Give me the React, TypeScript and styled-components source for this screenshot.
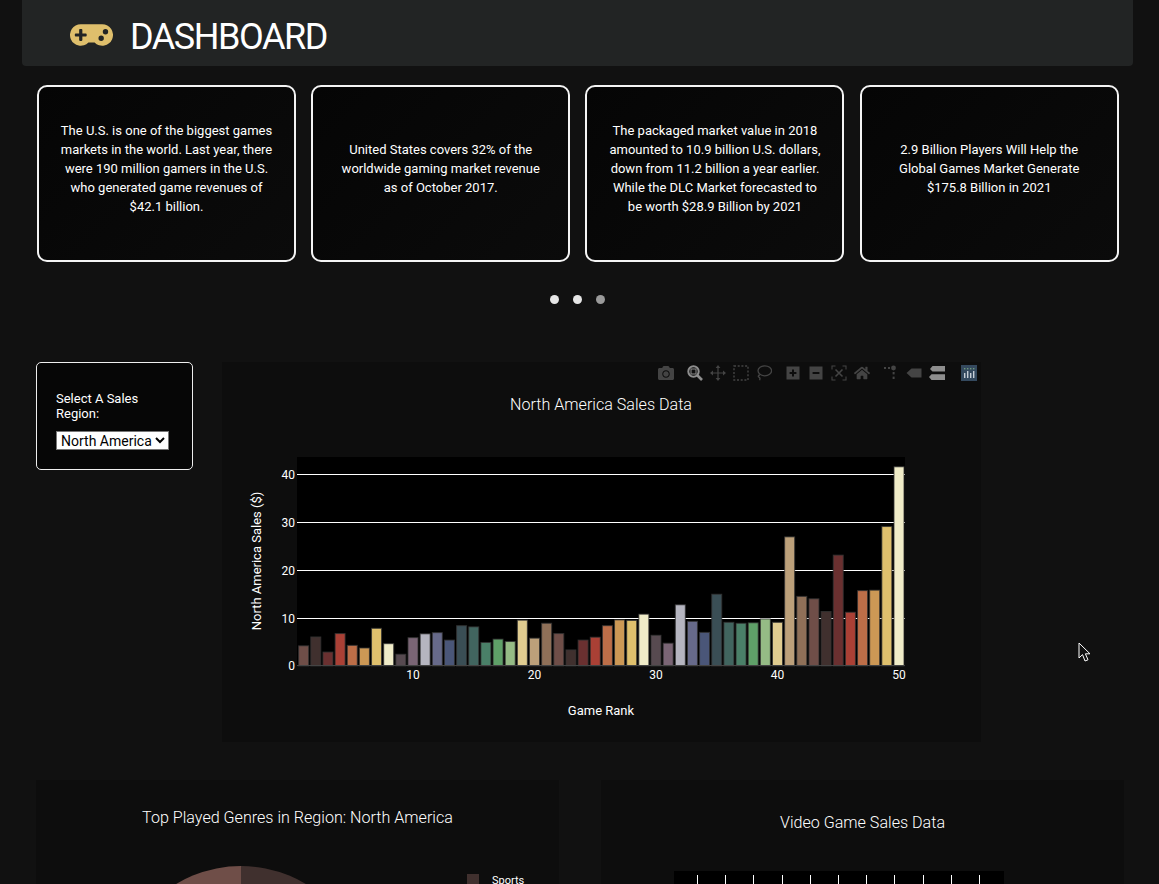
import React from "react";
import styled, { createGlobalStyle } from "styled-components";
import { FaCamera, FaGamepad, FaHome } from "react-icons/fa";

const GlobalStyle = createGlobalStyle`
  html, body {
    margin: 0;
    padding: 0;
    background: #111111;
    overflow: hidden;
  }
  * {
    box-sizing: border-box;
  }
`;

const Page = styled.div`
  width: 1159px;
  height: 884px;
  overflow: hidden;
  position: relative;
  background: #111111;
  color: #fff;
  font-family: Roboto, "Liberation Sans", sans-serif;
`;

const Header = styled.header`
  margin: 0 26px 0 22px;
  height: 66px;
  padding: 0 48px;
  display: flex;
  align-items: center;
  gap: 17px;
  background: #222424;
  border-radius: 0 0 4px 4px;
  svg {
    width: 43px;
    height: 36px;
    color: #dfbf6c;
    margin-top: 3px;
  }
`;

const Title = styled.h1`
  margin: 7px 0 0;
  font-size: 36px;
  line-height: 42px;
  font-weight: 400;
  letter-spacing: -1.45px;
`;

const Cards = styled.section`
  margin: 19px 40.3px 0 37px;
  display: grid;
  grid-template-columns: repeat(4, 259px);
  justify-content: space-between;
`;

const Card = styled.div`
  height: 177px;
  padding: 0 21px 10px;
  display: flex;
  align-items: center;
  justify-content: center;
  text-align: center;
  font-size: 13px;
  line-height: 19px;
  background: linear-gradient(135deg, #050505, #0b0b0b);
  border: 2px solid #f4f4f4;
  border-radius: 10px;
`;

const Dots = styled.div`
  margin-top: 33px;
  display: flex;
  justify-content: center;
  gap: 14px;
  padding-right: 4px;
`;

const Dot = styled.span<{ $dim?: boolean }>`
  width: 9px;
  height: 9px;
  border-radius: 50%;
  background: ${({ $dim }) => ($dim ? "#9a9a9a" : "#e6e6e6")};
`;

const MainRow = styled.section`
  margin: 58px 0 0 36px;
  display: flex;
  align-items: flex-start;
  gap: 29px;
`;

const SelectBox = styled.div`
  width: 157px;
  height: 108px;
  padding: 28px 19px 0;
  background: #060606;
  border: 1px solid #eeeeee;
  border-radius: 5px;
  font-size: 13px;
  line-height: 15px;
`;

const RegionSelect = styled.select`
  display: block;
  width: 113px;
  height: 19px;
  margin-top: 10px;
  padding: 0;
  font-family: Roboto, "Liberation Sans", sans-serif;
  font-size: 14px;
  color: #000;
  background: #fff;
  border: 1px solid #777;
  border-radius: 0;
`;

const ChartPanel = styled.div`
  position: relative;
  width: 759px;
  height: 380px;
  background: #0d0d0d;
  svg {
    display: block;
  }
`;

const Modebar = styled.div`
  position: absolute;
  top: 3px;
  right: 4px;
  display: flex;
  gap: 13px;
`;

const ModeGroup = styled.div`
  display: flex;
  gap: 7px;
`;

const ModeIcon = styled.span<{ $active?: boolean }>`
  width: 16px;
  height: 16px;
  display: flex;
  align-items: center;
  justify-content: center;
  color: ${({ $active }) => ($active ? "#8e8e8e" : "#444444")};
  svg {
    width: 16px;
    height: 16px;
  }
`;

const LogoTile = styled.span`
  width: 16px;
  height: 16px;
  display: flex;
  background: #34495e;
  margin-left: 3px;
`;

const BottomRow = styled.section`
  margin: 38px 35px 0 36px;
  display: grid;
  grid-template-columns: 523px 523px;
  gap: 42px;
`;

const BottomPanel = styled.div`
  height: 380px;
  background: #0d0d0d;
  display: flex;
  flex-direction: column;
  align-items: center;
  overflow: hidden;
`;

const PanelTitle = styled.h2<{ $top: number }>`
  margin: ${({ $top }) => $top}px 0 0;
  font-size: 16.1px;
  line-height: 20px;
  font-weight: 300;
  color: #fff;
`;

const PieRow = styled.div`
  align-self: stretch;
  margin-top: 38px;
  padding-left: 431px;
  display: flex;
  position: relative;
`;

const PieDrawing = styled.svg`
  position: absolute;
  left: 79px;
  top: 0;
`;

const LegendItem = styled.div`
  margin-top: 8px;
  display: flex;
  align-items: flex-start;
  gap: 13px;
  font-size: 11px;
  line-height: 14px;
`;

const LegendSwatch = styled.span`
  width: 12px;
  height: 12px;
  background: #40302e;
`;

const LowerPlot = styled.div`
  width: 330px;
  height: 220px;
  margin: 38px 47px 0 0;
  padding: 4px 24px 0 23px;
  background: #000;
  display: flex;
  justify-content: space-between;
  align-items: flex-start;
`;

const Tick = styled.span`
  width: 1px;
  height: 9px;
  background: #fff;
`;

const Pointer = styled.svg`
  position: absolute;
  left: 1078px;
  top: 642px;
`;

const facts = [
  "The U.S. is one of the biggest games markets in the world. Last year, there were 190 million gamers in the U.S. who generated game revenues of $42.1 billion.",
  "United States covers 32% of the worldwide gaming market revenue as of October 2017.",
  "The packaged market value in 2018 amounted to 10.9 billion U.S. dollars, down from 11.2 billion a year earlier. While the DLC Market forecasted to be worth $28.9 Billion by 2021",
  "2.9 Billion Players Will Help the Global Games Market Generate $175.8 Billion in 2021",
];

const sales = [
  4.2, 6.05, 2.9, 6.75, 4.3, 3.75, 7.85, 4.65, 2.45, 5.9,
  6.7, 6.95, 5.4, 8.4, 8.15, 4.9, 5.6, 5.1, 9.55, 5.8,
  8.9, 6.75, 3.35, 5.4, 6, 8.4, 9.6, 9.5, 10.8, 6.4,
  4.75, 12.75, 9.3, 7, 14.95, 9.1, 8.9, 9, 9.8, 9.1,
  26.9, 14.5, 14, 11.35, 23.1, 11.2, 15.7, 15.8, 29.05, 41.5,
];

const palette = [
  "#6f4e48", "#40302e", "#6a3030", "#aa4035", "#bd6e48", "#cc9855", "#dfc06d",
  "#f0ecc8", "#574a50", "#7a6575", "#b5b5c0", "#676a8a", "#4a5678", "#3a4e55",
  "#41655f", "#4a8068", "#5fa068", "#95bb85", "#e0cc90", "#bca07a", "#8f7058",
];

// plot area inside the chart panel
const plot = { left: 75, top: 95, width: 608, height: 209 };
const unit = 4.8;
const step = 12.15;
const barX = (rank: number) => 191 + (rank - 10) * step;

const SalesChart = () => (
  <svg width={759} height={380} fontFamily="Roboto, 'Liberation Sans', sans-serif">
    <rect x={plot.left} y={plot.top} width={plot.width} height={plot.height} fill="#000" />
    {[10, 20, 30, 40].map((v) => (
      <rect key={v} x={plot.left} y={304 - v * unit} width={plot.width} height={1} fill="#fff" />
    ))}
    {sales.map((value, i) => (
      <rect
        key={i}
        x={barX(i + 1) - 5}
        y={304 - value * unit}
        width={10}
        height={value * unit}
        fill={palette[i % palette.length]}
        stroke="#333"
        strokeOpacity={0.8}
        strokeWidth={1}
      />
    ))}
    <rect x={plot.left} y={303} width={plot.width} height={1} fill="#444" />
    {[0, 10, 20, 30, 40].map((v) => (
      <text key={v} x={73} y={v === 0 ? 308 : 304 - v * unit + 5} textAnchor="end" fontSize={12} fill="#fff">
        {v}
      </text>
    ))}
    {[10, 20, 30, 40, 50].map((v) => (
      <text key={v} x={barX(v)} y={317} textAnchor="middle" fontSize={12} fill="#fff">
        {v}
      </text>
    ))}
    <text x={379} y={48} textAnchor="middle" fontSize={16.1} fontWeight={300} fill="#fff">
      North America Sales Data
    </text>
    <text x={379} y={353} textAnchor="middle" fontSize={13} fill="#fff">
      Game Rank
    </text>
    <text
      transform="translate(39 199) rotate(-90)"
      textAnchor="middle"
      fontSize={13}
      fill="#fff"
    >
      North America Sales ($)
    </text>
  </svg>
);

const ZoomGlyph = () => (
  <svg viewBox="0 0 16 16" fill="none" stroke="currentColor">
    <circle cx="6.5" cy="6.5" r="5.2" strokeWidth="2" />
    <rect x="4" y="4" width="5" height="5" strokeWidth="1" />
    <path d="M10.5 10.5 15 15" strokeWidth="2.6" />
  </svg>
);

const PanGlyph = () => (
  <svg viewBox="0 0 16 16" fill="currentColor">
    <path d="M7.4 3h1.2v4.4H13v1.2H8.6V13H7.4V8.6H3V7.4h4.4Z" />
    <path d="M8 0 10.4 3H5.6ZM8 16 5.6 13H10.4ZM0 8 3 5.6V10.4ZM16 8 13 10.4V5.6Z" />
  </svg>
);

const SelectGlyph = () => (
  <svg viewBox="0 0 16 16" fill="none" stroke="currentColor">
    <rect x="1" y="1" width="14" height="14" strokeWidth="1.4" strokeDasharray="2 1.7" />
  </svg>
);

const LassoGlyph = () => (
  <svg viewBox="0 0 16 16" fill="none" stroke="currentColor" strokeWidth="1.3">
    <ellipse cx="8.8" cy="5.8" rx="6.8" ry="5" />
    <path d="M4 10c-1.8 0-2.3 1.6-1 2.2 1 .5 1.4 1.2.6 3" />
  </svg>
);

const PlusGlyph = () => (
  <svg viewBox="0 0 16 16">
    <rect x="1.5" y="1.5" width="13" height="13" fill="currentColor" />
    <path d="M8 4.6v6.8M4.6 8h6.8" stroke="#0d0d0d" strokeWidth="2" />
  </svg>
);

const MinusGlyph = () => (
  <svg viewBox="0 0 16 16">
    <rect x="1.5" y="1.5" width="13" height="13" fill="currentColor" />
    <path d="M4.6 8h6.8" stroke="#0d0d0d" strokeWidth="2" />
  </svg>
);

const AutoscaleGlyph = () => (
  <svg viewBox="0 0 16 16" fill="none" stroke="currentColor" strokeWidth="1.1">
    <path d="M1 4.5V1h3.5M11.5 1H15v3.5M15 11.5V15h-3.5M4.5 15H1v-3.5" />
    <path d="M4.5 4.5l7 7M11.5 4.5l-7 7" strokeWidth="1.6" />
  </svg>
);

const SpikeGlyph = () => (
  <svg viewBox="0 0 16 16" fill="currentColor">
    <circle cx="10.5" cy="3" r="2.4" />
    <rect x="1" y="2" width="2" height="2" />
    <rect x="5" y="2" width="2" height="2" />
    <rect x="9.6" y="7" width="2" height="2.4" />
    <rect x="9.6" y="11.6" width="2" height="2.4" />
  </svg>
);

const ClosestGlyph = () => (
  <svg viewBox="0 0 16 16" fill="currentColor">
    <path d="M0.5 8 5.5 3.5H15.5V12.5H5.5Z" />
  </svg>
);

const CompareGlyph = () => (
  <svg viewBox="0 0 16 16" fill="currentColor">
    <path d="M1 4 3.5 1H16V6.6H3.5ZM0 12 2.5 9.2H16V15H2.5Z" />
  </svg>
);

const PlotlyLogo = () => (
  <svg viewBox="0 0 16 16" width={16} height={16} fill="#c6ced6">
    {[3, 6, 9, 12].map((x, i) => (
      <React.Fragment key={x}>
        <rect x={x} y={i % 2 ? 6 : 8} width={1.4} height={i % 2 ? 7 : 5} />
        <rect x={x} y={3} width={1.4} height={1.4} fill="#6f9a7c" />
      </React.Fragment>
    ))}
  </svg>
);

const modeGroups: { key: string; node: React.ReactNode; active?: boolean }[][] = [
  [{ key: "camera", node: <FaCamera /> }],
  [
    { key: "zoom", node: <ZoomGlyph />, active: true },
    { key: "pan", node: <PanGlyph /> },
    { key: "select", node: <SelectGlyph /> },
    { key: "lasso", node: <LassoGlyph /> },
  ],
  [
    { key: "plus", node: <PlusGlyph /> },
    { key: "minus", node: <MinusGlyph /> },
    { key: "autoscale", node: <AutoscaleGlyph /> },
    { key: "home", node: <FaHome /> },
  ],
  [
    { key: "spike", node: <SpikeGlyph /> },
    { key: "closest", node: <ClosestGlyph /> },
    { key: "compare", node: <CompareGlyph />, active: true },
  ],
];

export default function App() {
  return (
    <Page>
      <GlobalStyle />
      <Header>
        <FaGamepad />
        <Title>DASHBOARD</Title>
      </Header>

      <Cards>
        {facts.map((fact) => (
          <Card key={fact}>{fact}</Card>
        ))}
      </Cards>

      <Dots>
        <Dot />
        <Dot />
        <Dot $dim />
      </Dots>

      <MainRow>
        <SelectBox>
          Select A Sales Region:
          <RegionSelect defaultValue="North America">
            <option>North America</option>
            <option>Europe</option>
            <option>Japan</option>
            <option>Other</option>
          </RegionSelect>
        </SelectBox>
        <ChartPanel>
          <SalesChart />
          <Modebar>
            {modeGroups.map((group) => (
              <ModeGroup key={group[0].key}>
                {group.map((item) => (
                  <ModeIcon key={item.key} $active={item.active}>
                    {item.node}
                  </ModeIcon>
                ))}
              </ModeGroup>
            ))}
            <LogoTile>
              <PlotlyLogo />
            </LogoTile>
          </Modebar>
        </ChartPanel>
      </MainRow>

      <BottomRow>
        <BottomPanel>
          <PanelTitle $top={28}>Top Played Genres in Region: North America</PanelTitle>
          <PieRow>
            <PieDrawing width={252} height={252} viewBox="0 0 252 252">
              <path d="M126 126V0A126 126 0 0 0 0 126Z" fill="#6f4e48" />
              <path d="M126 126V0A126 126 0 0 1 252 126Z" fill="#40302e" />
            </PieDrawing>
            <LegendItem>
              <LegendSwatch />
              Sports
            </LegendItem>
          </PieRow>
        </BottomPanel>
        <BottomPanel>
          <PanelTitle $top={33}>Video Game Sales Data</PanelTitle>
          <LowerPlot>
            {Array.from({ length: 11 }).map((_, i) => (
              <Tick key={i} />
            ))}
          </LowerPlot>
        </BottomPanel>
      </BottomRow>

      <Pointer width={13} height={21} viewBox="0 0 13 21">
        <path
          d="M1 1V16L4.5 12.6 7 19 10 17.8 7.4 11.8H12Z"
          fill="#111"
          stroke="#fff"
          strokeWidth="1"
        />
      </Pointer>
    </Page>
  );
}
